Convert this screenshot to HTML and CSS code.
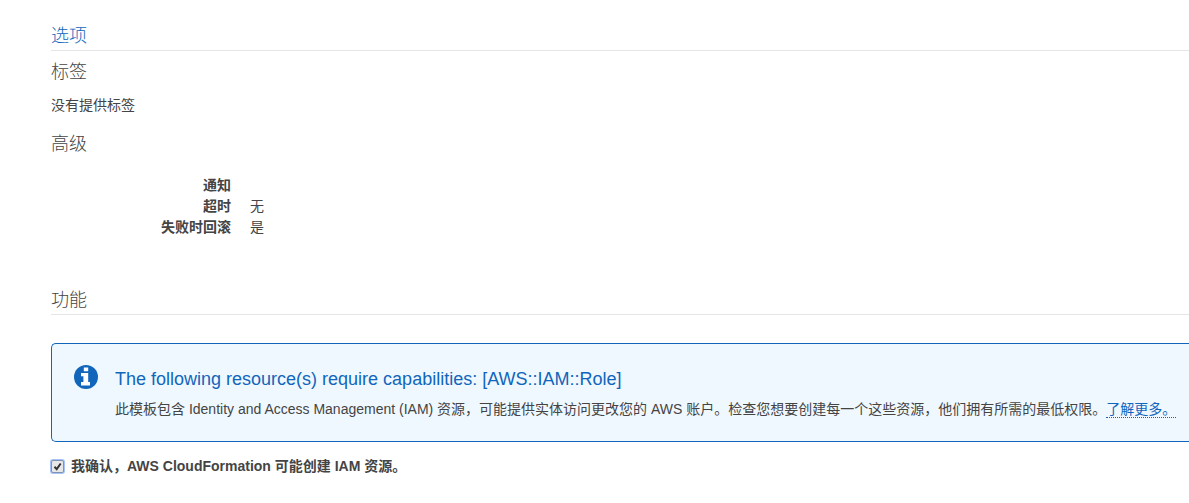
FILE: index.html
```html
<!DOCTYPE html>
<html lang="zh-CN">
<head>
<meta charset="utf-8">
<title>选项</title>
<link rel="stylesheet" href="styles.css">
</head>
<body>
<main class="review">
  <section class="options">
    <h2 class="section-title section-title-primary">选项</h2>
    <h3 class="subtitle">标签</h3>
    <p class="empty-note">没有提供标签</p>
    <h3 class="subtitle">高级</h3>
    <dl class="details">
      <dt>通知</dt><dd></dd>
      <dt>超时</dt><dd>无</dd>
      <dt>失败时回滚</dt><dd>是</dd>
    </dl>
  </section>
  <section class="capabilities">
    <h2 class="section-title">功能</h2>
    <div class="alert">
      <svg class="alert-icon" viewBox="0 0 24 24" aria-hidden="true">
        <circle cx="12" cy="12" r="12" fill="#1166bb"/>
        <path fill="#fff" d="M9.8 2.6h4.4v3.6H9.8zM7 8h7.2v9H16v3.4H7V17h2.4v-5.8H7z"/>
      </svg>
      <div class="alert-body">
        <h4 class="alert-title">The following resource(s) require capabilities: [AWS::IAM::Role]</h4>
        <p class="alert-text">此模板包含 Identity and Access Management (IAM) 资源，可能提供实体访问更改您的 AWS 账户。检查您想要创建每一个这些资源，他们拥有所需的最低权限。<a class="more-link" href="#more">了解更多。</a></p>
      </div>
    </div>
    <div class="confirm">
      <input class="confirm-box" type="checkbox" id="confirm" checked>
      <label class="confirm-label" for="confirm">我确认，AWS CloudFormation 可能创建 IAM 资源。</label>
    </div>
  </section>
</main>
</body>
</html>
```
FILE: styles.css
```css
* {
  box-sizing: border-box;
}

body {
  margin: 0;
  background: #fff;
  color: #444;
  font: 14px/21px "Liberation Sans", "Noto Sans CJK SC", sans-serif;
}

h2, h3, h4, p, dl, dd {
  margin: 0;
}

.review {
  padding: 23px 0 24px 51px;
}

.section-title,
.subtitle {
  font-size: 18px;
  line-height: 26px;
  font-weight: 300;
}

.section-title {
  padding-bottom: 1px;
  border-bottom: 1px solid #e5e5e5;
}

.section-title-primary {
  color: #1166bb;
}

.subtitle {
  margin-top: 8px;
}

.empty-note {
  margin: 10px 0 15px;
}

.details {
  display: grid;
  grid-template-columns: 180px 1fr;
  grid-auto-rows: 21px;
  column-gap: 19px;
  margin-top: 18px;
}

.details dt {
  font-weight: 700;
  text-align: right;
}

.capabilities {
  margin-top: 49px;
}

.alert {
  display: flex;
  gap: 17px;
  margin-top: 28px;
  padding: 21px 0 18px 22px;
  border: 1px solid #1166bb;
  border-right: 0;
  border-radius: 5px 0 0 5px;
  background: #f0f8ff;
}

.alert-icon {
  flex: none;
  width: 24px;
  height: 24px;
}

.alert-title {
  color: #1166bb;
  font-size: 18px;
  line-height: 28px;
  font-weight: 400;
}

.alert-text {
  margin-top: 2px;
  line-height: 28px;
}

.more-link {
  border-bottom: 1px dotted #1166bb;
  color: #1166bb;
  text-decoration: none;
}

.confirm {
  display: flex;
  align-items: center;
  gap: 7px;
  margin-top: 14px;
}

.confirm-box {
  appearance: none;
  flex: none;
  width: 13px;
  height: 13px;
  margin: 0;
  border: 1px solid #8193ae;
  border-radius: 2px;
  background: #e8e8e8 url("data:image/svg+xml,%3Csvg xmlns='http://www.w3.org/2000/svg' viewBox='0 0 11 11'%3E%3Cpath d='M2.5 5.8l2.2 2.3 4-5.6' fill='none' stroke='%23333' stroke-width='2'/%3E%3C/svg%3E") center / 11px 11px no-repeat;
  box-shadow: 0 0 0 1px #a5c3fa;
}

.confirm-label {
  font-weight: 700;
}
```
